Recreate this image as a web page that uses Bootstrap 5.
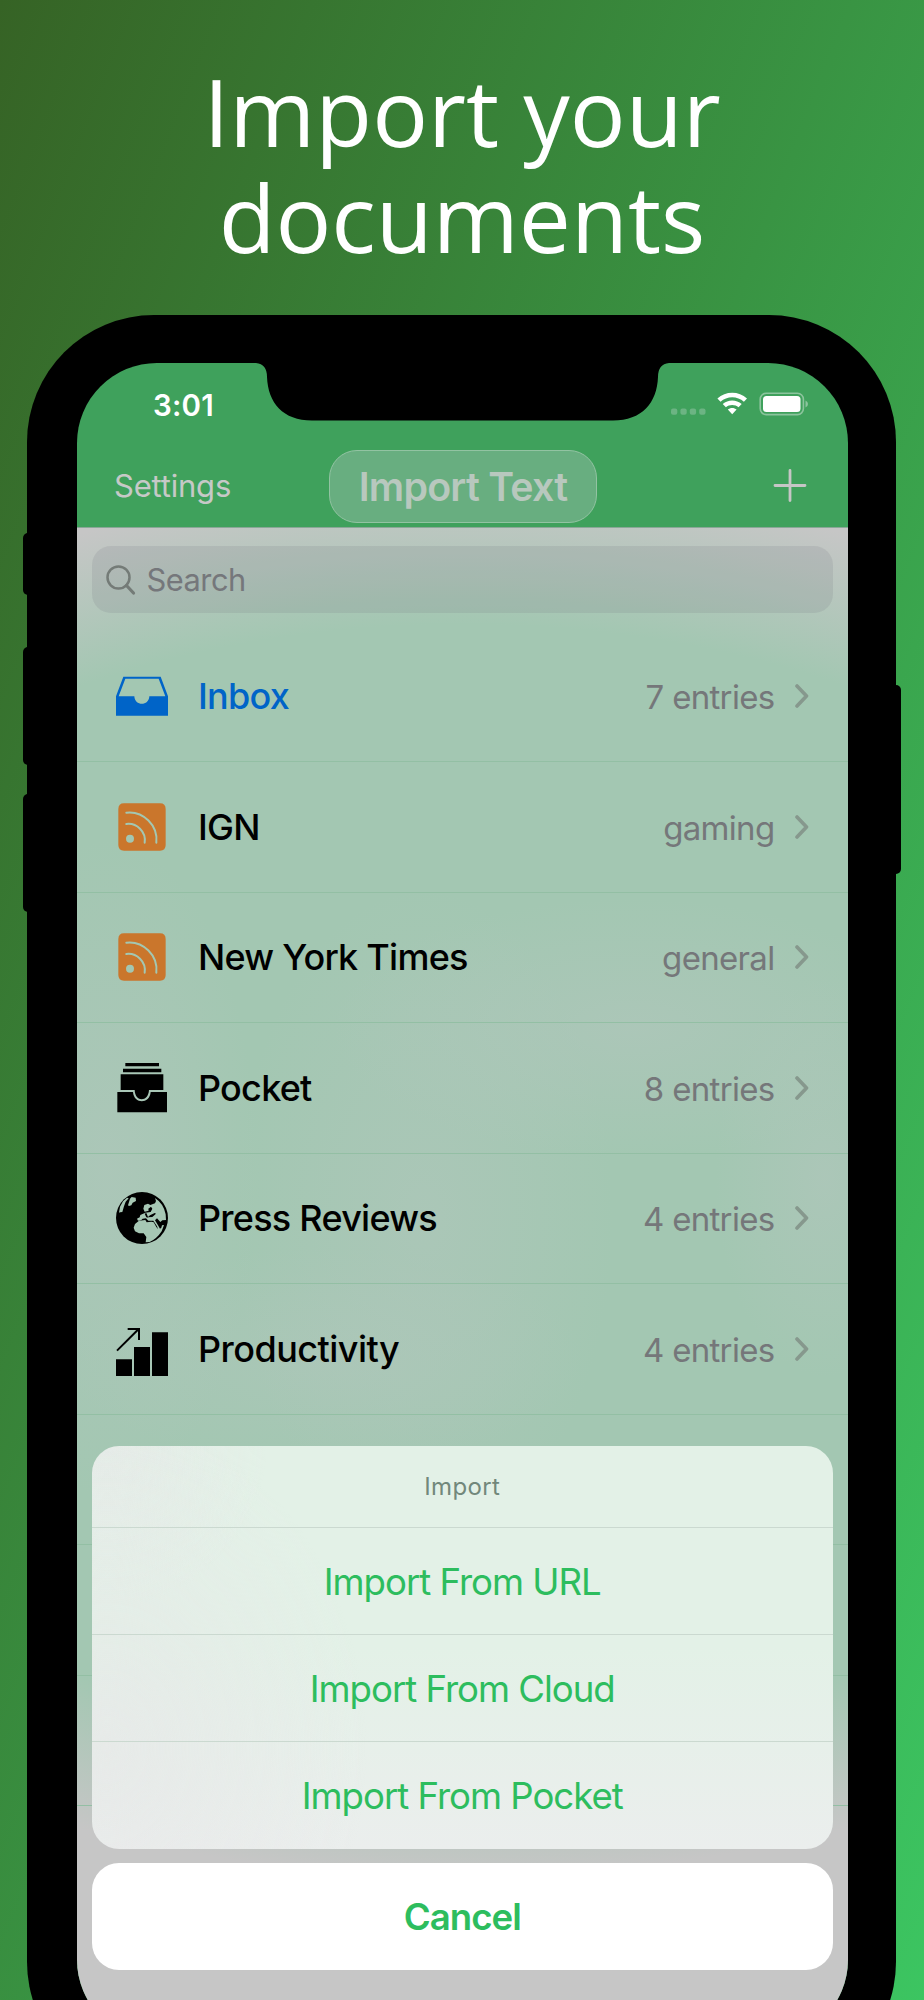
<!DOCTYPE html>
<html lang="en">
<head>
<meta charset="utf-8">
<meta name="viewport" content="width=device-width, initial-scale=1">
<title>Import your documents</title>
<link href="https://cdn.jsdelivr.net/npm/bootstrap@5.3.0/dist/css/bootstrap.min.css" rel="stylesheet">
<style>
html,body{height:2000px;overflow:hidden}
body{font-family:Inter,"Liberation Sans",sans-serif;background:linear-gradient(111.4deg,#366325,#3cc561)}
.promo{height:2000px}
.headline{font:400 92.9px/106px "Open Sans","Noto Sans",sans-serif;padding-top:57.5px;height:314.5px;margin:0}
.phone{width:869px;height:1774px;margin-left:27px;background:#000;border-radius:127px;padding:48.5px 48px 49px 50px}
.key{background:#000;width:12px;border-radius:5px}
.screen{height:1677px;border-radius:80px;overflow:hidden;background:#3fa15c}
.notch{left:179px;top:0}
.statusbar{height:81px;padding:3px 39px 0 76px}
.clock{font-size:29.5px;font-weight:600;letter-spacing:.2px}
.topbar{height:83px;color:#c6c9c7;padding:1.5px 41px 0 37px}
.topbar .side{font-size:31px;width:160px;letter-spacing:-.2px}
.pill{width:268px;height:73px;margin-left:5px;border:1.5px solid #92c3a2;border-radius:28px;background:#68ae80;color:#b8c8be;font-size:39.3px;font-weight:600;letter-spacing:-.75px;padding-top:2px}
.listing{height:1512px;border-top:1px solid #8aa797;background:
 radial-gradient(ellipse 300px 130px at 72% 500px,rgba(180,198,190,.5),transparent),
 radial-gradient(ellipse 190px 330px at 45% 690px,rgba(180,198,190,.45),transparent),
 radial-gradient(ellipse 110px 200px at 97% 650px,rgba(180,198,190,.5),transparent),
 radial-gradient(ellipse 150px 330px at 4% 640px,rgba(180,198,190,.5),transparent),
 radial-gradient(ellipse 260px 110px at 32% 830px,rgba(180,198,190,.4),transparent),
 radial-gradient(ellipse 1042px 696px at 50% 653px,#a3c7b2 80%,#c6c6c6 100%)}
.searchbox{margin:18px 15px 0;height:67px;border-radius:19px;background:rgba(108,108,120,.15);color:#75777b;font-size:30.8px;letter-spacing:-.5px;padding:1px 0 0 14px;gap:10.5px}
.entries{padding-top:18.5px}
.entry{height:130.5px;border-bottom:1.5px solid #93bfa4;padding:0 39px;font-size:36px;font-weight:500;color:#000;letter-spacing:-.75px}
.entry .glyph{width:52px;height:52px;margin-right:30px}
.entry .info{font-size:33px;font-weight:400;color:#75777a;margin-right:20.5px;padding-top:3px;letter-spacing:-.68px}
.entry .chev{fill:none;stroke:#86988d;stroke-width:3.6;stroke-linecap:round;stroke-linejoin:round}
.sheet{left:14.5px;right:15px;top:1082.5px}
.choices{height:403px;border-radius:27px;overflow:hidden;background:
 radial-gradient(ellipse 260px 330px at 2% 75%,rgba(231,232,232,.7),transparent),
 radial-gradient(ellipse 160px 160px at 2% 0%,rgba(231,232,232,.6),transparent),
 linear-gradient(#e3f1e7 50%,#ebeeed)}
.choices>*{border-bottom:1.5px solid #cbd9d0;height:107px;padding-top:2px;font-size:36.6px;letter-spacing:-1.02px;color:#2dbd5e}
.choices>.caption-row{height:82.5px;font-size:24px;letter-spacing:.35px;color:#72887b}
.choices>:last-child{border:0;height:106px}
.cancel{height:107px;margin-top:14.5px;padding-top:1px;border-radius:27px;background:#fff;color:#2dbd5e;font-size:36.6px;font-weight:600;letter-spacing:-.95px}
</style>
</head>
<body>
<svg width="0" height="0" class="position-absolute">
 <symbol id="feed" viewBox="0 0 156 156"><path fill="#ca762c" d="M24 7H132Q149 7 149 24V132Q149 149 132 149H24Q7 149 7 132V24Q7 7 24 7Z"/><g fill="none" stroke="#a3c7b2" stroke-width="6" stroke-linecap="round"><path d="M31 35C82 29 127 74 121 125M31 69C62 65 91 92 86 125"/></g><circle cx="42" cy="113" r="12" fill="#a3c7b2"/></symbol>
 <symbol id="chev" viewBox="0 0 14 24"><path d="M2 2 11.5 12 2 22"/></symbol>
</svg>
<main class="promo position-relative overflow-hidden">
<h1 class="headline text-white text-center">Import your<br>documents</h1>
<div class="phone position-relative">
 <i class="key position-absolute" style="left:-4px;top:218.5px;height:62px"></i>
 <i class="key position-absolute" style="left:-4px;top:332px;height:118px"></i>
 <i class="key position-absolute" style="left:-4px;top:479.500px;height:118px"></i>
 <i class="key position-absolute" style="right:-5px;top:370.500px;height:189px"></i>
 <div class="screen position-relative">
  <svg class="notch position-absolute" width="413" height="60" viewBox="0 0 413 60"><path d="M0 0Q11 1 11 14C12 40 27 57.500 56 57.500H357C386 57.500 401 40 402 14Q402 1 413 0Z"/></svg>
  <div class="statusbar d-flex justify-content-between align-items-center">
   <span class="clock text-white">3:01</span>
   <svg width="138" height="26" viewBox="0 0 138 26" fill="#fff">
    <g fill="#6cb483"><rect x="0" y="16.5" width="6.3" height="6.3" rx="2"/><rect x="9.4" y="16.5" width="6.3" height="6.3" rx="2"/><rect x="18.8" y="16.5" width="6.3" height="6.3" rx="2"/><rect x="28.2" y="16.5" width="6.3" height="6.3" rx="2"/></g>
    <path d="M46.4 6.6C54.5-1.3 67.9-1.3 76 6.6L72.9 9.8C66.500 3.700 55.900 3.700 49.500 9.800ZM51.700 12.100C57 7.200 65.400 7.200 70.700 12.100L67.500 15.300C64.200 12.100 58.200 12.100 54.900 15.300ZM56.800 17.500C59.200 15.400 63.200 15.400 65.600 17.500L61.200 22.300Z"/>
    <rect x="89.2" y="1.2" width="43.2" height="21.4" rx="6" fill="none" stroke="#8cc49d" stroke-width="1.6"/><rect x="92" y="4" width="37.5" height="16" rx="3.5"/><path fill="#8cc49d" d="M134.500 8.500Q137 9.500 137 12T134.500 15.500Z"/>
   </svg>
  </div>
  <header class="topbar d-flex justify-content-between align-items-center">
   <span class="side">Settings</span>
   <div class="pill d-flex align-items-center justify-content-center">Import Text</div>
   <span class="side d-flex justify-content-end"><svg width="34" height="34" viewBox="0 0 34 34" stroke="#c6c6c6" stroke-width="2.8" stroke-linecap="round"><path d="M17 1.500V31.500M2 16.500H32"/></svg></span>
  </header>
  <div class="listing">
   <div class="searchbox d-flex align-items-center"><svg width="30" height="31" viewBox="0 0 30 31" fill="none" stroke="#747b77" stroke-linecap="round"><circle cx="12.5" cy="12.5" r="11" stroke-width="2.5"/><path stroke-width="3.2" d="M20.500 20.500 27.500 28"/></svg>Search</div>
   <div class="entries">
    <div class="entry d-flex align-items-center" style="color:#0064c8"><svg class="glyph" viewBox="0 0 156 156"><path fill="#0064c8" d="M0 79 22 20H134L156 79V137H0ZM28 26 8 79H55C56 109 99 109 100 79H148L128 26Z" fill-rule="evenodd"/></svg><span>Inbox</span><span class="info ms-auto">7 entries</span><svg class="chev" width="14" height="24"><use href="#chev"/></svg></div>
    <div class="entry d-flex align-items-center"><svg class="glyph"><use href="#feed"/></svg><span>IGN</span><span class="info ms-auto">gaming</span><svg class="chev" width="14" height="24"><use href="#chev"/></svg></div>
    <div class="entry d-flex align-items-center"><svg class="glyph"><use href="#feed"/></svg><span>New York Times</span><span class="info ms-auto">general</span><svg class="chev" width="14" height="24"><use href="#chev"/></svg></div>
    <div class="entry d-flex align-items-center"><svg class="glyph" viewBox="0 0 156 156"><path d="M28 3H129V13H28ZM21 20H136V31H21ZM14 37H142V84H99C97 121 57 121 56 84H14ZM4 90H51C54 127 101 127 104 90H153V151H4Z"/></svg><span>Pocket</span><span class="info ms-auto">8 entries</span><svg class="chev" width="14" height="24"><use href="#chev"/></svg></div>
    <div class="entry d-flex align-items-center"><svg class="glyph" viewBox="0 0 156 156"><circle cx="78" cy="78" r="78"/><g fill="#a6c7b4"><path d="M9 62 12 44 21 28 33 17 38 19 29 29 24 43 19 60 12 61Z"/><path d="M36 40 42 20 47 15 59 17 60 27 50 32 46 40 39 42Z"/><path d="M117 18Q143 35 149 67L150 84 139 85 133 90 123 79 117 85 126 100 132 110 136 107 138 100 144 99 137 118Q122 141 101 150L89 151 91 135 83 124 69 124 57 118 53 107 57 96 69 86 88 84 92 91 106 89 113 91 121 105 126 112 123 103 112 86 97 86 90 79 80 80 76 84 66 86 63 80 71 76 73 69 88 62 104 60 109 50 105 44 97 50 98 56 86 59 82 50 85 39 96 35 103 39 117 34 120 27Z"/></g><path d="M65 59 76 57 74 45 67 50ZM95 76 109 75 120 65 116 63 102 70ZM86 65 91 76 97 77 91 63Z"/></svg><span>Press Reviews</span><span class="info ms-auto">4 entries</span><svg class="chev" width="14" height="24"><use href="#chev"/></svg></div>
    <div class="entry d-flex align-items-center"><svg class="glyph" viewBox="0 0 156 156" overflow="visible"><path d="M0 109H48V159H0ZM54 72H102V159H54ZM108 28H156V159H108Z"/><path d="M3 83 68 18M35 18H69V51" fill="none" stroke="#000" stroke-width="6"/></svg><span style="letter-spacing:-.53px">Productivity</span><span class="info ms-auto">4 entries</span><svg class="chev" width="14" height="24"><use href="#chev"/></svg></div>
    <div class="entry"></div><div class="entry"></div><div class="entry"></div>
   </div>
  </div>
  <div class="sheet position-absolute">
   <div class="choices">
    <div class="caption-row d-flex align-items-center justify-content-center">Import</div>
    <div class="d-flex align-items-center justify-content-center">Import From URL</div>
    <div class="d-flex align-items-center justify-content-center">Import From Cloud</div>
    <div class="d-flex align-items-center justify-content-center">Import From Pocket</div>
   </div>
   <div class="cancel d-flex align-items-center justify-content-center">Cancel</div>
  </div>
 </div>
</div>
</main>
<script src="https://cdn.jsdelivr.net/npm/bootstrap@5.3.0/dist/js/bootstrap.bundle.min.js"></script>
</body>
</html>
